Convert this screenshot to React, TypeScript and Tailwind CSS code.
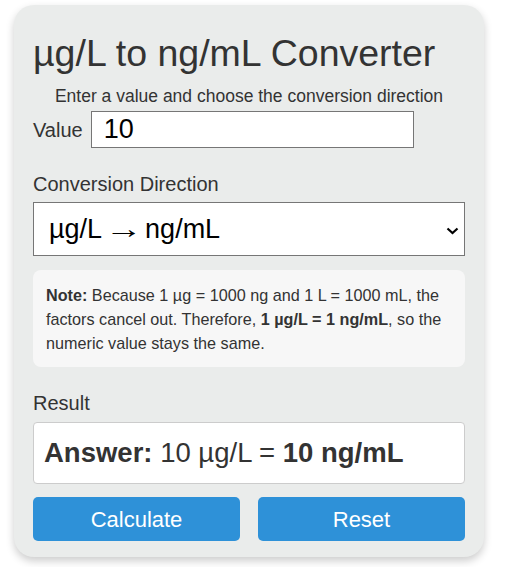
import React from "react";

export default function App() {
  return (
    <div className="min-h-[567px] bg-white pl-[14px] pt-[5px]" style={{ fontFamily: '"Liberation Sans", Arial, sans-serif' }}>
      <div className="flex h-[552px] w-[470px] flex-col rounded-[20px] bg-[#eaeceb] px-[19px] pt-[26px] pb-[16px] text-[#333] shadow-[0_4px_8px_rgba(0,0,0,0.2)]">
        <h1 className="text-[37.5px] leading-[44px] font-normal">µg/L to ng/mL Converter</h1>
        <p className="mt-[10px] text-center text-[17.5px] leading-[22px]">Enter a value and choose the conversion direction</p>
        <div className="mt-[4px] flex items-center gap-[8px]">
          <label className="text-[20px] leading-[24px]">Value</label>
          <input
            type="text"
            defaultValue="10"
            className="h-[37px] w-[323px] border border-[#767676] bg-white pl-[12px] text-[27px] text-black outline-none"
          />
        </div>
        <label className="mt-[24px] text-[20px] leading-[24px]">Conversion Direction</label>
        <div className="relative mt-[6px] flex h-[54px] w-full items-center border border-[#767676] bg-white pl-[15px] text-[27px] text-black">
          <span>
            µg/L <span className="mx-[1px] inline-block scale-x-[1.4]">→</span> ng/mL
          </span>
          <svg className="pointer-events-none absolute right-[5px] top-[24px]" width="13" height="8" viewBox="0 0 13 8" fill="none">
            <path d="M1.5 1.5 L6.5 6 L11.5 1.5" stroke="#000" strokeWidth="2.2" />
          </svg>
        </div>
        <div className="mt-[14px] rounded-[8px] bg-[#f7f7f7] px-[13px] pt-[13px] pb-[12px] text-[16.2px] leading-[24px]">
          <strong>Note:</strong> Because 1 µg = 1000 ng and 1 L = 1000 mL, the factors cancel out. Therefore,{" "}
          <strong>1 µg/L = 1 ng/mL</strong>, so the numeric value stays the same.
        </div>
        <div className="mt-[24px] text-[20px] leading-[24px]">Result</div>
        <div className="mt-[7px] flex h-[62px] items-center rounded-[4px] border border-[#cccccc] bg-white pl-[10px] text-[27.5px]">
          <span>
            <strong>Answer:</strong> 10 µg/L = <strong>10 ng/mL</strong>
          </span>
        </div>
        <div className="mt-[13px] flex gap-[18px]">
          <button className="h-[44px] flex-1 rounded-[5px] bg-[#2e91d8] text-[22px] text-white">Calculate</button>
          <button className="h-[44px] flex-1 rounded-[5px] bg-[#2e91d8] text-[22px] text-white">Reset</button>
        </div>
      </div>
    </div>
  );
}
